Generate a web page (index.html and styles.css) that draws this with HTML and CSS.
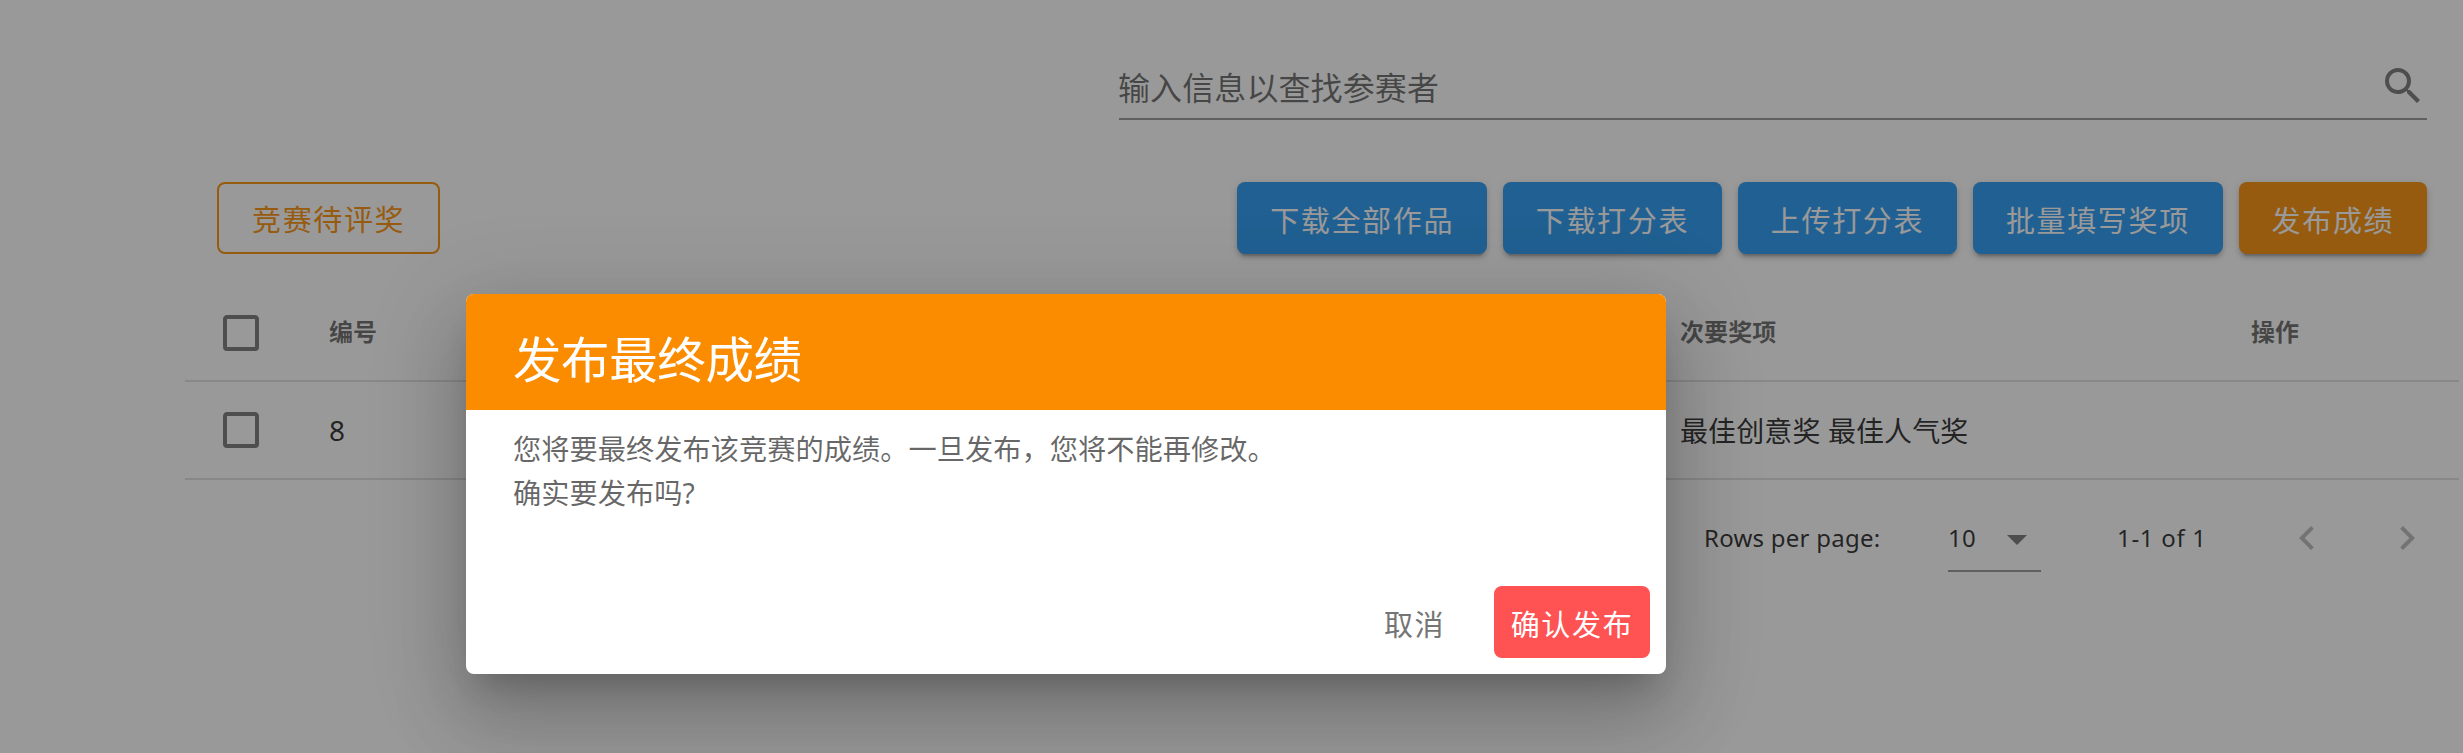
FILE: index.html
```html
<!DOCTYPE html>
<html lang="zh-CN">
<head>
<meta charset="utf-8">
<title>发布最终成绩</title>
<link rel="stylesheet" href="styles.css">
</head>
<body>
<main class="page">
  <div class="search">
    <span class="search-label">输入信息以查找参赛者</span>
    <svg class="icon" viewBox="0 0 24 24"><path d="M9.5,3A6.5,6.5 0 0,1 16,9.5C16,11.11 15.41,12.59 14.44,13.73L14.71,14H15.5L20.5,19L19,20.5L14,15.5V14.71L13.73,14.44C12.59,15.41 11.11,16 9.5,16A6.5,6.5 0 0,1 3,9.5A6.5,6.5 0 0,1 9.5,3M9.5,5C7,5 5,7 5,9.5C5,12 7,14 9.5,14C12,14 14,12 14,9.5C14,7 12,5 9.5,5Z"/></svg>
  </div>
  <div class="toolbar">
    <button class="btn outlined">竞赛待评奖</button>
    <div class="actions">
      <button class="btn raised primary">下载全部作品</button>
      <button class="btn raised primary">下载打分表</button>
      <button class="btn raised primary">上传打分表</button>
      <button class="btn raised primary">批量填写奖项</button>
      <button class="btn raised warning">发布成绩</button>
    </div>
  </div>
  <section class="table">
    <div class="row head">
      <svg class="icon" viewBox="0 0 24 24"><path d="M19,3H5C3.89,3 3,3.89 3,5V19A2,2 0 0,0 5,21H19A2,2 0 0,0 21,19V5C21,3.89 20.1,3 19,3M19,5V19H5V5H19Z"/></svg>
      <span>编号</span><span>次要奖项</span><span>操作</span>
    </div>
    <div class="row">
      <svg class="icon" viewBox="0 0 24 24"><path d="M19,3H5C3.89,3 3,3.89 3,5V19A2,2 0 0,0 5,21H19A2,2 0 0,0 21,19V5C21,3.89 20.1,3 19,3M19,5V19H5V5H19Z"/></svg>
      <span>8</span><span>最佳创意奖 最佳人气奖</span><span></span>
    </div>
    <div class="footer">
      <span class="rows-label">Rows per page:</span>
      <div class="select"><span>10</span><svg class="icon" viewBox="0 0 24 24"><path d="M7,10L12,15L17,10H7Z"/></svg></div>
      <span class="range">1-1 of 1</span>
      <svg class="icon disabled prev" viewBox="0 0 24 24"><path d="M15.41,16.58L10.83,12L15.41,7.41L14,6L8,12L14,18L15.41,16.58Z"/></svg>
      <svg class="icon disabled next" viewBox="0 0 24 24"><path d="M8.59,16.58L13.17,12L8.59,7.41L10,6L16,12L10,18L8.59,16.58Z"/></svg>
    </div>
  </section>
</main>
<div class="overlay">
  <div class="dialog" role="dialog">
    <h1 class="dialog-title">发布最终成绩</h1>
    <p class="dialog-text">您将要最终发布该竞赛的成绩。一旦发布，您将不能再修改。<br>确实要发布吗?</p>
    <div class="dialog-actions">
      <button class="btn text">取消</button>
      <button class="btn danger">确认发布</button>
    </div>
  </div>
</div>
</body>
</html>
```
FILE: styles.css
```css
* { box-sizing: border-box; }

body {
  margin: 0;
  width: 2463px;
  height: 753px;
  position: relative;
  overflow: hidden;
  background: #fff;
  color: rgba(0, 0, 0, .87);
  font-family: "Noto Sans", "Noto Sans CJK SC", sans-serif;
  font-size: 28px;
}

.page {
  height: 753px;
  padding: 56px 4px 0 185px;
}

.icon {
  width: 48px;
  height: 48px;
  flex: none;
  display: block;
  fill: rgba(0, 0, 0, .54);
}

.search {
  display: flex;
  justify-content: space-between;
  height: 64px;
  margin: 0 32px 0 934px;
  padding-top: 6px;
  border-bottom: 2px solid rgba(0, 0, 0, .42);
}

.search-label {
  margin-left: -1px;
  font-size: 32px;
  line-height: 52px;
  letter-spacing: .1px;
  color: rgba(0, 0, 0, .6);
}

.toolbar {
  display: flex;
  justify-content: space-between;
  margin: 62px 32px 0;
}

.actions { display: flex; gap: 16.2px; }

.btn {
  height: 72px;
  padding: 2px 32.8px 0;
  border: 0;
  border-radius: 8px;
  font-family: "Noto Sans CJK SC", sans-serif;
  font-size: 29px;
  line-height: 70px;
  letter-spacing: 1.65px;
  white-space: nowrap;
  color: #fff;
}

.outlined {
  padding: 0 33px;
  line-height: 68px;
  border: 2px solid #fb8c00;
  background: transparent;
  color: #fb8c00;
}

.raised {
  box-shadow: 0 6px 2px -4px rgba(0, 0, 0, .2), 0 4px 4px rgba(0, 0, 0, .14), 0 2px 10px rgba(0, 0, 0, .12);
}

.primary { background: #2196f3; }
.warning { background: #fb8c00; }

.table { margin-top: 30px; }

.row {
  display: grid;
  grid-template-columns: 112px 1351px 571px 1fr;
  align-items: center;
  height: 98px;
  padding: 0 0 0 32px;
  border-bottom: 2px solid rgba(0, 0, 0, .12);
  letter-spacing: .1px;
}

.head {
  font-size: 24px;
  font-weight: 700;
  color: rgba(0, 0, 0, .6);
}

.head .icon { margin-top: 2px; }
.head span { margin-bottom: 3px; }

.footer {
  display: flex;
  align-items: center;
  height: 116px;
  padding-left: 1519px;
  font-size: 24px;
}

.rows-label { width: 244px; margin-bottom: 2px; white-space: nowrap; letter-spacing: .25px; }

.select {
  display: flex;
  align-items: center;
  justify-content: space-between;
  width: 93px;
  height: 64px;
  margin-top: 4px;
  border-bottom: 2px solid rgba(0, 0, 0, .42);
}

.select span { margin-bottom: 3px; letter-spacing: .3px; }
.range { width: 166px; margin: 0 0 2px 76px; letter-spacing: .7px; }
.disabled { opacity: .5; }
.next { margin-left: 52px; }

.overlay {
  position: absolute;
  inset: 0;
  padding: 294px 0 0 466px;
  background: rgba(33, 33, 33, .46);
}

.dialog {
  width: 1200px;
  height: 380px;
  display: flex;
  flex-direction: column;
  overflow: hidden;
  border-radius: 8px;
  background: #fff;
  box-shadow: 0 22px 30px -14px rgba(0, 0, 0, .2), 0 48px 76px 6px rgba(0, 0, 0, .14), 0 18px 92px 16px rgba(0, 0, 0, .12);
}

.dialog-title {
  margin: 0;
  height: 116px;
  padding: 33px 47px 0;
  background: #fb8c00;
  color: #fff;
  font-size: 48.5px;
  font-weight: 400;
  line-height: 64px;
  letter-spacing: -.4px;
}

.dialog-text {
  margin: 0;
  padding: 17px 47px 0;
  line-height: 44px;
  font-size: 28.25px;
  color: rgba(0, 0, 0, .6);
}

.dialog-actions {
  display: flex;
  justify-content: flex-end;
  gap: 16px;
  margin-top: auto;
  padding: 16px;
}

.select .icon { margin-right: 0; }
.text { background: transparent; color: #757575; }
.danger { padding: 2px 16.7px 0; background: #ff5252; }
```
